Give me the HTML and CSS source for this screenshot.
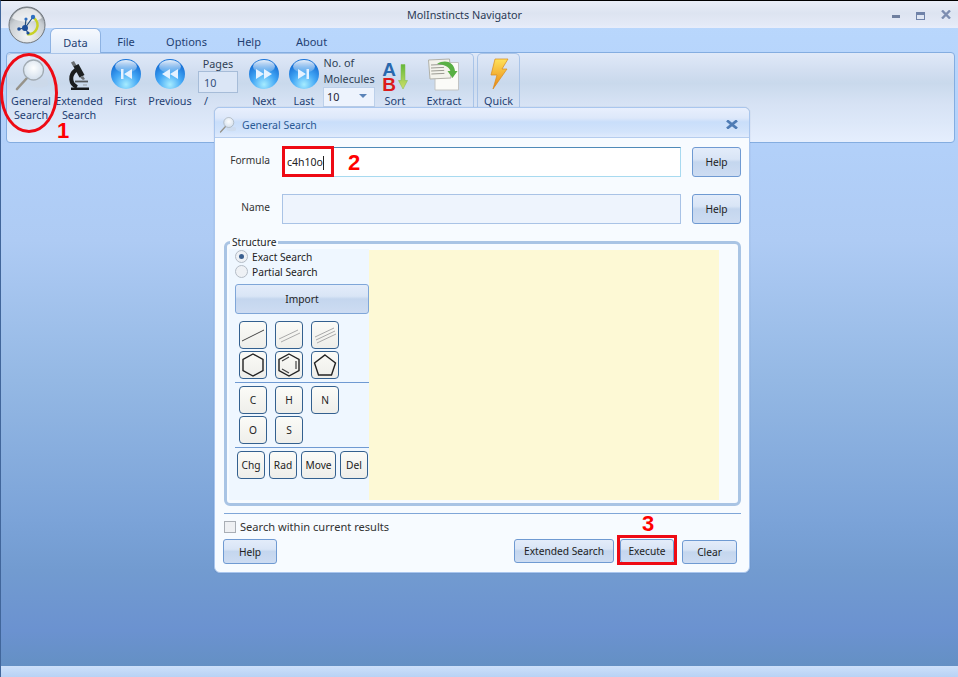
FILE: index.html
```html
<!DOCTYPE html>
<html lang="en">
<head>
    <meta charset="UTF-8">
    <title>MolInstincts Navigator</title>
    <link rel="stylesheet" href="styles.css">
</head>
<body>
<svg class="defs" width="0" height="0">
    <defs>
        <radialGradient id="orb" cx="50%" cy="85%" r="72%">
            <stop offset="0" stop-color="#a6ecff"/>
            <stop offset="0.55" stop-color="#43a7f5"/>
            <stop offset="1" stop-color="#1a74d8"/>
        </radialGradient>
        <linearGradient id="shine" x1="0" y1="0" x2="0" y2="1">
            <stop offset="0" stop-color="#fff" stop-opacity="0.9"/>
            <stop offset="1" stop-color="#fff" stop-opacity="0.1"/>
        </linearGradient>
        <radialGradient id="lens" cx="50%" cy="40%" r="60%">
            <stop offset="0" stop-color="#fdfeff"/>
            <stop offset="1" stop-color="#d3dfec"/>
        </radialGradient>
        <radialGradient id="ball" cx="50%" cy="80%" r="75%">
            <stop offset="0" stop-color="#f3f5f6"/>
            <stop offset="0.7" stop-color="#c8cdd2"/>
            <stop offset="1" stop-color="#8d949b"/>
        </radialGradient>
        <linearGradient id="bolt" x1="0" y1="0" x2="0" y2="1">
            <stop offset="0" stop-color="#ffe25a"/>
            <stop offset="1" stop-color="#e9830f"/>
        </linearGradient>
        <linearGradient id="arrow" x1="0" y1="0" x2="0" y2="1">
            <stop offset="0" stop-color="#62b83a"/>
            <stop offset="1" stop-color="#cfe06a"/>
        </linearGradient>
        <symbol id="glass" viewBox="0 0 34 34">
            <ellipse cx="25" cy="26" rx="10" ry="4.500" fill="#cdd9e8" opacity="0.6"/>
            <path d="M13 21 3 32" stroke="#96938a" stroke-width="2.600" stroke-linecap="round"/>
            <circle cx="19.500" cy="13" r="10" fill="url(#lens)" stroke="#a2abb3" stroke-width="1.300"/>
        </symbol>
    </defs>
</svg>

<div class="app">
    <div class="titlebar">
        <svg class="logo" width="38" height="38" viewBox="0 0 38 38">
            <circle cx="19" cy="19" r="18" fill="url(#ball)" stroke="#6f757b" stroke-width="1"/>
            <path d="M19 2a17 17 0 0 1 15 10c-8 5-22 5-30 0A17 17 0 0 1 19 2z" fill="#f4f5f6" opacity="0.8"/>
            <path d="M26 12a9 9 0 0 1-7 16" fill="none" stroke="#c8d226" stroke-width="2.600"/>
            <path d="M17 22 25 11M17 22l-6 1M17 22l1-9M17 22l3 5" stroke="#24507f" stroke-width="1.200"/>
            <circle cx="17" cy="22" r="3" fill="#1d4f9a"/>
            <circle cx="25" cy="11" r="2.200" fill="#2f6fc0"/>
            <circle cx="11" cy="23" r="1.800" fill="#1d4f9a"/>
            <circle cx="20" cy="27" r="1.600" fill="#1d4f9a"/>
            <circle cx="18" cy="13" r="1.600" fill="#2f6fc0"/>
        </svg>
        <span class="app-title">MolInstincts Navigator</span>
        <div class="window-btns">
            <span class="win-min"></span>
            <span class="win-max"></span>
            <svg class="win-close" width="10" height="9" viewBox="0 0 10 9"><path d="M1 .5l8 8M9 .5l-8 8" stroke="#7d8db0" stroke-width="2.400"/></svg>
        </div>
    </div>

    <div class="tabs">
        <span class="tab active">Data</span>
        <span class="tab tab-file">File</span>
        <span class="tab tab-options">Options</span>
        <span class="tab tab-help">Help</span>
        <span class="tab tab-about">About</span>
    </div>

    <div class="ribbon">
        <div class="group group-main">
            <div class="tool">
                <svg width="34" height="34"><use href="#glass"/></svg>
                <span>General<br>Search</span>
            </div>
            <div class="tool">
                <svg width="24" height="36" viewBox="-1 0 24 36">
                    <path d="M3 6.500 6 5l2.500 4.500-3 1.500z" fill="#6a6e72"/>
                    <path d="M5.500 10.500 10.500 8l6 11-5 2.500z" fill="#1d2022"/>
                    <path d="M12 21.500l3-1.500 2 3-2 1z" fill="#6a6e72"/>
                    <path d="M8 14C1 19 2 28 9 31" fill="none" stroke="#1a1c1e" stroke-width="4"/>
                    <path d="M7 25.500h13" stroke="#55595c" stroke-width="1.800"/>
                    <path d="M3 31.500h18V34H3z" fill="#16181a"/>
                    <path d="M15 29h4" stroke="#9a9ea2"/>
                </svg>
                <span>Extended<br>Search</span>
            </div>
            <div class="tool">
                <svg width="32" height="32" viewBox="0 0 32 32">
                    <circle cx="16" cy="16" r="15" fill="url(#orb)"/>
                    <ellipse cx="16" cy="8.500" rx="11" ry="6.500" fill="url(#shine)"/>
                    <path d="M11 11h2.500v10H11zM22 11v10l-8-5z" fill="#e6f2ff"/>
                </svg>
                <span>First</span>
            </div>
            <div class="tool">
                <svg width="32" height="32" viewBox="0 0 32 32">
                    <circle cx="16" cy="16" r="15" fill="url(#orb)"/>
                    <ellipse cx="16" cy="8.500" rx="11" ry="6.500" fill="url(#shine)"/>
                    <path d="M16 11v10l-8-5zM24 11v10l-8-5z" fill="#e6f2ff"/>
                </svg>
                <span>Previous</span>
            </div>
            <div class="pages">
                <span>Pages</span>
                <div class="pages-box">10</div>
                <span class="pages-slash">/</span>
            </div>
            <div class="tool">
                <svg width="32" height="32" viewBox="0 0 32 32">
                    <circle cx="16" cy="16" r="15" fill="url(#orb)"/>
                    <ellipse cx="16" cy="8.500" rx="11" ry="6.500" fill="url(#shine)"/>
                    <path d="M8 11v10l8-5zM16 11v10l8-5z" fill="#e6f2ff"/>
                </svg>
                <span>Next</span>
            </div>
            <div class="tool">
                <svg width="32" height="32" viewBox="0 0 32 32">
                    <circle cx="16" cy="16" r="15" fill="url(#orb)"/>
                    <ellipse cx="16" cy="8.500" rx="11" ry="6.500" fill="url(#shine)"/>
                    <path d="M10 11v10l8-5zM18.500 11H21v10h-2.500z" fill="#e6f2ff"/>
                </svg>
                <span>Last</span>
            </div>
            <div class="molecules">
                <span>No. of<br>Molecules</span>
                <div class="combo">10<i class="combo-arrow"></i></div>
            </div>
            <div class="tool">
                <div class="sort-icon">
                    <div class="sort-letters">
                        <b class="sort-a">A</b>
                        <b class="sort-b">B</b>
                    </div>
                    <svg width="10" height="26" viewBox="0 0 10 26">
                        <path d="M3 .5h4v16h2.500L5 25 .5 16.500H3z" fill="url(#arrow)" stroke="#7fb84a" stroke-width="0.500"/>
                    </svg>
                </div>
                <span>Sort</span>
            </div>
            <div class="tool">
                <svg width="32" height="34" viewBox="0 0 32 34">
                    <path d="M7 5.500h23.500v27.500H7z" fill="#fbfbf8" stroke="#c2c4c4"/>
                    <path d="M.5 3l21-1 1.500 19-21 1z" fill="#f3f3ec" stroke="#b0b0a8"/>
                    <path d="M3 8l13-.6M3 11l13-.6M3.200 14l13-.6M3.400 17l13-.6" stroke="#9a9a92"/>
                    <path d="M9 7c8-5 17-2 18 7h2.500l-5 7-5-7h3c-1-4-7-7-13.500-7z" fill="#58b044"/>
                </svg>
                <span>Extract</span>
            </div>
        </div>
        <div class="group group-quick">
            <div class="tool">
                <svg width="20" height="32" viewBox="0 0 20 32">
                    <path d="M6 1h13l-6 10h5L4 31l4-14H2z" fill="url(#bolt)" stroke="#d98a1a" stroke-width="0.700"/>
                </svg>
                <span>Quick</span>
            </div>
        </div>
    </div>

    <div class="desktop"></div>
    <div class="statusbar"></div>
</div>

<div class="dialog">
    <div class="dialog-head">
        <svg width="17" height="17"><use href="#glass"/></svg>
        <span class="dialog-title">General Search</span>
        <svg class="dialog-close" width="12" height="9" viewBox="0 0 12 9"><path d="M1 .5l10 8M11 .5l-10 8" stroke="#4f7cb5" stroke-width="2.800"/></svg>
    </div>
    <div class="dialog-body">
        <div class="field-row">
            <label class="field-label">Formula</label>
            <div class="text-input">c4h10o<i class="caret"></i></div>
            <button class="btn btn-help">Help</button>
        </div>
        <div class="field-row">
            <label class="field-label">Name</label>
            <div class="text-input disabled"></div>
            <button class="btn btn-help">Help</button>
        </div>

        <fieldset class="structure">
            <legend>Structure</legend>
            <div class="palette">
                <label class="radio-row"><i class="radio checked"></i>Exact Search</label>
                <label class="radio-row"><i class="radio"></i>Partial Search</label>
                <button class="btn btn-import">Import</button>

                <div class="key-grid">
                    <button class="key"><svg width="24" height="24"><path d="M1 18 23 7" stroke="#444" stroke-width="1"/></svg></button>
                    <button class="key"><svg width="24" height="24"><path d="M2 16 21 7M4 19 23 10" stroke="#aaa" stroke-width="1"/></svg></button>
                    <button class="key"><svg width="24" height="24"><path d="M2 14 21 5M3 17 22 8M4 20 23 11" stroke="#aaa" stroke-width="1"/></svg></button>
                    <button class="key"><svg width="24" height="24"><path d="M12 1l10 5.500v11L12 23 2 17.500v-11z" fill="none" stroke="#222" stroke-width="1.400"/></svg></button>
                    <button class="key"><svg width="24" height="24"><path d="M12 1l10 5.500v11L12 23 2 17.500v-11z" fill="none" stroke="#222" stroke-width="1.400"/><path d="M5 8l7-4M19 8v8M5 16l7 4" stroke="#444" stroke-width="1.200"/></svg></button>
                    <button class="key"><svg width="24" height="24"><path d="M12 2l10.500 8-4 12h-13l-4-12z" fill="none" stroke="#222" stroke-width="1.400"/></svg></button>
                </div>

                <div class="key-grid with-line">
                    <button class="key">C</button>
                    <button class="key">H</button>
                    <button class="key">N</button>
                    <button class="key">O</button>
                    <button class="key">S</button>
                </div>

                <div class="key-row">
                    <button class="key">Chg</button>
                    <button class="key">Rad</button>
                    <button class="key key-wide">Move</button>
                    <button class="key">Del</button>
                </div>
            </div>
            <div class="canvas"></div>
        </fieldset>

        <div class="within">
            <i class="checkbox"></i>
            <span>Search within current results</span>
        </div>
        <div class="dialog-foot">
            <button class="btn btn-foot-help">Help</button>
            <button class="btn btn-extended">Extended Search</button>
            <button class="btn btn-execute">Execute</button>
            <button class="btn btn-clear">Clear</button>
        </div>
    </div>
</div>

<!-- annotations over the screenshot -->
<div class="mark-ellipse"></div>
<span class="mark-num num-1">1</span>
<div class="mark-box box-formula"></div>
<span class="mark-num num-2">2</span>
<div class="mark-box box-execute"></div>
<span class="mark-num num-3">3</span>
</body>
</html>
```

FILE: styles.css
```css
* {
    box-sizing: border-box;
}

html, body {
    margin: 0;
    height: 100%;
    overflow: hidden;
}

body {
    font-family: "Noto Sans", "Open Sans", sans-serif;
    font-size: 10.8px;
    color: #222;
    position: relative;
}

.defs {
    position: absolute;
}

.app {
    height: 677px;
    display: flex;
    flex-direction: column;
    border-top: 1px solid #000;
    border-left: 1px solid #41669b;
    background: linear-gradient(#bad8fd 0, #b3d1fa 130px, #aecbf4 240px, #94b8e4 380px, #7ba3d8 520px, #729bd0 570px, #6b92d0 630px, #6490c4 665px);
}

/* title bar */
.titlebar {
    height: 27px;
    flex: none;
    display: flex;
    align-items: center;
    justify-content: center;
    background: linear-gradient(#eaeef8 0, #dde4f1 12px, #e4eaf7 24px, #e8edfb 27px);
    position: relative;
    color: #2b3a55;
}

.app-title {
    margin-left: -30px;
}

.logo {
    position: absolute;
    left: 7px;
    top: 5px;
    z-index: 2;
}

.window-btns {
    position: absolute;
    right: 7px;
    top: 9px;
    display: flex;
    gap: 16px;
    align-items: flex-start;
}

.win-min {
    width: 8px;
    height: 3px;
    margin-top: 5px;
    background: #6f7f9f;
}

.win-max {
    width: 9px;
    height: 8px;
    margin-top: 2px;
    border: 1px solid #6f82a8;
    border-top-width: 3px;
}

/* tabs */
.tabs {
    height: 24px;
    flex: none;
    display: flex;
    padding-left: 49px;
    font-size: 11px;
}

.tab {
    color: #1f3f72;
    text-align: center;
    line-height: 27px;
}

.tab.active {
    width: 51px;
    height: 25px;
    background: linear-gradient(#f6f9fe, #dce8f8);
    border: 1px solid #8db2e2;
    border-bottom: none;
    border-radius: 6px 6px 0 0;
    position: relative;
    z-index: 1;
}

.tab-file { width: 50px; }
.tab-options { width: 71px; }
.tab-help { width: 54px; }
.tab-about { width: 71px; }

/* ribbon */
.ribbon {
    height: 91px;
    flex: none;
    margin: 0 3px 0 5px;
    display: flex;
    align-items: flex-start;
    gap: 3px;
    border: 1px solid #84ade0;
    border-radius: 4px;
    background: linear-gradient(#e0e9f8 0, #cfdcef 22px, #c9d9ec 30px, #d6e2f4 50px, #dde8f9 70px, #e6effe 91px);
}

.group {
    height: 54px;
    border: 1px solid #a9c4e8;
    border-bottom: none;
    border-radius: 5px 5px 0 0;
}

.group-main {
    width: 467px;
    border-left: none;
    display: grid;
    grid-template-columns: 48px 48px 45px 44px 52px 40px 40px 50px 42px 56px;
}

.group-quick {
    width: 43px;
    display: flex;
    justify-content: center;
}

.tool {
    display: grid;
    grid-template-rows: 40px auto;
    justify-items: center;
    align-items: center;
    text-align: center;
    line-height: 14px;
    color: #1f3f72;
    white-space: nowrap;
}

.tool > span {
    align-self: start;
}

.pages, .molecules {
    display: flex;
    flex-direction: column;
    align-items: center;
    color: #2f3f55;
    line-height: 16px;
}

.pages {
    padding-top: 2px;
}

.pages-box {
    width: 40px;
    height: 22px;
    margin-top: -1px;
    padding: 3px 5px;
    background: #dbe6f6;
    border: 1px solid #a6bcd8;
    color: #33507a;
}

.pages-slash {
    align-self: flex-start;
    margin-left: 12px;
    color: #1f3f72;
}

.molecules {
    padding-top: 1px;
}

.combo {
    width: 52px;
    height: 20px;
    flex: none;
    padding: 1px 3px;
    background: #edf3fd;
    border: 1px solid #bcd0ea;
    position: relative;
    color: #223;
}

.combo-arrow {
    position: absolute;
    right: 7px;
    top: 6px;
    border: 4px solid transparent;
    border-top: 4px solid #5a83b8;
}

.sort-icon {
    display: flex;
    align-items: center;
    gap: 2px;
    padding-top: 6px;
}

.sort-letters {
    display: flex;
    flex-direction: column;
    width: 14px;
    font-family: "Liberation Sans", sans-serif;
    font-size: 19px;
    line-height: 15px;
    text-align: center;
}

.sort-a {
    height: 15px;
    color: #2a69ae;
}

.sort-b {
    height: 15px;
    color: #dc1a1a;
}

.desktop {
    flex: 1;
}

.statusbar {
    height: 11px;
    flex: none;
    background: linear-gradient(#cde0fa, #b8d2f5);
}

/* dialog */
.dialog {
    position: absolute;
    left: 214px;
    top: 107px;
    width: 536px;
    height: 466px;
    background: #f7fbff;
    border: 1px solid #a9c6ee;
    border-radius: 6px;
    display: flex;
    flex-direction: column;
    box-shadow: 0 0 1px rgba(60, 90, 130, 0.4);
}

.dialog-head {
    height: 30px;
    flex: none;
    display: flex;
    align-items: center;
    padding: 5px 11px 0 4px;
    gap: 6px;
    border-bottom: 1px solid #b5cdee;
    border-radius: 5px 5px 0 0;
    background: linear-gradient(#e8effd 0, #dde8fa 10px, #c9defa 14px, #d3e4fb 24px, #e2ecfd 30px);
}

.dialog-head svg {
    margin-bottom: 2px;
}

.dialog-title {
    flex: 1;
    color: #2a5a95;
    font-size: 10.5px;
}

.dialog-body {
    flex: 1;
    padding: 9px 8px 0 9px;
}

.field-row {
    display: flex;
    align-items: flex-start;
    margin-bottom: 17px;
}

.field-label {
    width: 46px;
    text-align: right;
    margin: 6px 11px 0 0;
    color: #333;
    font-size: 10.2px;
}

.text-input {
    width: 399px;
    height: 30px;
    margin-left: 1px;
    padding: 8px 4px 0;
    background: #fff;
    border: 1px solid #4f8ab8;
    border-bottom-color: #a8daf0;
    border-right-color: #a8daf0;
    line-height: 13px;
    font-size: 10.5px;
    display: flex;
}

.text-input.disabled {
    background: #eef4fd;
    border-color: #a9c3e6;
}

.caret {
    width: 1px;
    height: 14px;
    background: #222;
}

.btn {
    font-family: inherit;
    font-size: 10.2px;
    color: #222;
    padding: 0;
    border: 1px solid #6f9ad2;
    border-radius: 3px;
    background: linear-gradient(#e3ecfa 0, #d9e5f6 40%, #c4d6ee 50%, #cddcf2 100%);
}

.btn-help {
    width: 49px;
    height: 30px;
    margin-left: 11px;
}

/* structure box */
.structure {
    height: 270px;
    margin: -5px 0 0;
    padding: 1px 17px 0 2px;
    border: 3px solid #a9c4e4;
    border-radius: 6px;
    display: flex;
}

.structure legend {
    padding: 0 2px;
    margin-left: 1px;
    font-size: 10.2px;
    line-height: 12px;
    color: #222;
}

.palette {
    width: 140px;
    height: 251px;
    flex: none;
    background: #eff7ff;
    padding-left: 6px;
}

.canvas {
    width: 350px;
    height: 250px;
    margin-top: 1px;
    flex: none;
    background: #fdf9d5;
}

.radio-row {
    display: flex;
    align-items: center;
    height: 15px;
    gap: 4px;
    font-size: 10.2px;
}

.radio {
    width: 13px;
    height: 13px;
    border: 1px solid #b4bcc6;
    border-radius: 50%;
    background: #eef1f5;
    position: relative;
}

.radio.checked::after {
    content: "";
    position: absolute;
    left: 3px;
    top: 3px;
    width: 5px;
    height: 5px;
    border-radius: 50%;
    background: #3a5f8f;
}

.btn-import {
    display: block;
    width: 134px;
    height: 30px;
    margin: 5px 0 7px;
    border-color: #7fa6d8;
}

.key-grid {
    display: grid;
    grid-template-columns: repeat(3, 28px);
    grid-auto-rows: 28px;
    column-gap: 8px;
    row-gap: 2px;
    padding: 0 0 3px 4px;
    border-bottom: 1px solid #6f9ad2;
}

.key-grid.with-line {
    padding-top: 3px;
}

.key-row {
    display: flex;
    gap: 4px;
    padding: 3px 0 0 2px;
}

.key {
    width: 28px;
    height: 28px;
    padding: 0;
    display: flex;
    align-items: center;
    justify-content: center;
    font-family: inherit;
    font-size: 10.2px;
    color: #222;
    border: 1px solid #33608f;
    border-radius: 4px;
    background: linear-gradient(#fbfbf7, #eeeeea);
}

.key-wide {
    width: 35px;
}

/* bottom of dialog */
.within {
    margin-top: 7px;
    padding-top: 6px;
    border-top: 1px solid #7fa6d8;
    display: flex;
    align-items: center;
    gap: 4px;
    font-size: 11.1px;
    line-height: 13px;
    color: #333;
}

.checkbox {
    width: 12px;
    height: 12px;
    border: 1px solid #a9aeb5;
    background: #eef0f3;
}

.dialog-foot {
    display: flex;
    align-items: flex-start;
    margin: 6px 0 0 -1px;
}

.btn-foot-help {
    width: 54px;
    height: 25px;
}

.btn-extended {
    width: 100px;
    height: 24px;
    margin-left: 237px;
}

.btn-execute {
    width: 54px;
    height: 24px;
    margin-left: 6px;
}

.btn-clear {
    width: 55px;
    height: 24px;
    margin: 1px 0 0 8px;
}

/* red annotations */
.mark-ellipse {
    position: absolute;
    left: 0;
    top: 53px;
    width: 58px;
    height: 80px;
    border: 3px solid #ee0a14;
    border-radius: 50%;
}

.mark-box {
    position: absolute;
    border: 3px solid #ee0a14;
}

.box-formula {
    left: 282px;
    top: 146px;
    width: 52px;
    height: 31px;
}

.box-execute {
    left: 617px;
    top: 535px;
    width: 60px;
    height: 30px;
}

.mark-num {
    position: absolute;
    font-family: "Liberation Sans", sans-serif;
    font-weight: bold;
    font-size: 22px;
    line-height: 18px;
    color: #f00;
}

.num-1 { left: 57px; top: 122px; }
.num-2 { left: 348px; top: 154px; }
.num-3 { left: 642px; top: 515px; }
```
